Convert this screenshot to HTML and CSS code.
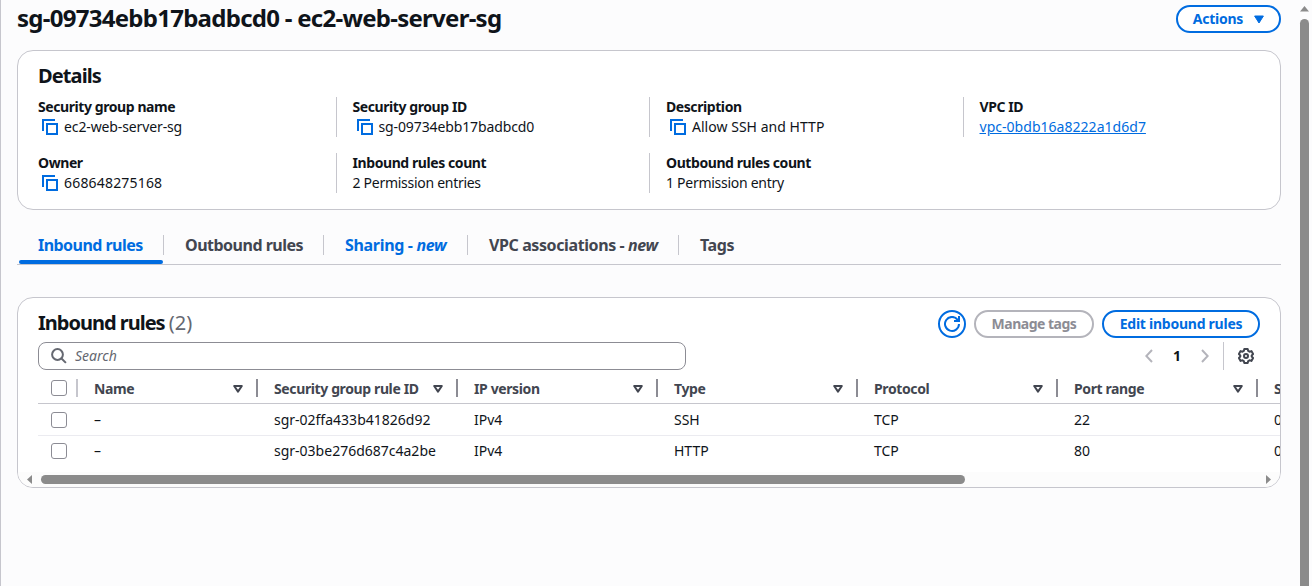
FILE: index.html
```html
<!DOCTYPE html>
<html lang="en">
<head>
<meta charset="utf-8">
<title>Security group</title>
<link rel="stylesheet" href="styles.css">
</head>
<body>
<svg class="defs" width="0" height="0">
  <symbol id="copy" viewBox="0 0 16 16"><path d="M1 12V1h12M5 5h10v10H5z"/></symbol>
  <symbol id="sort" viewBox="0 0 10 8"><path d="M1.2 1h7.6L5 6.6z"/></symbol>
</svg>
<div class="page">
  <main class="content">
    <header class="page-header">
      <h1 class="page-title">sg-09734ebb17badbcd0 - ec2-web-server-sg</h1>
      <button class="button actions">Actions<svg class="caret" viewBox="0 0 10 9"><path d="M.6 1h8.8L5 8z"/></svg></button>
    </header>

    <section class="card details">
      <h2 class="card-title">Details</h2>
      <div class="fields">
        <div class="field"><div class="label">Security group name</div><div class="value"><svg class="copy"><use href="#copy"/></svg>ec2-web-server-sg</div></div>
        <div class="field"><div class="label">Security group ID</div><div class="value"><svg class="copy"><use href="#copy"/></svg>sg-09734ebb17badbcd0</div></div>
        <div class="field"><div class="label">Description</div><div class="value roomy"><svg class="copy"><use href="#copy"/></svg>Allow SSH and HTTP</div></div>
        <div class="field"><div class="label">VPC ID</div><div class="value roomy"><a class="link" href="#">vpc-0bdb16a8222a1d6d7</a></div></div>
        <div class="field"><div class="label">Owner</div><div class="value digits"><svg class="copy"><use href="#copy"/></svg>668648275168</div></div>
        <div class="field"><div class="label">Inbound rules count</div><div class="value tight">2 Permission entries</div></div>
        <div class="field"><div class="label">Outbound rules count</div><div class="value tight">1 Permission entry</div></div>
      </div>
    </section>

    <nav class="tabs">
      <div class="tab tab-inbound">Inbound rules</div>
      <div class="tab tab-outbound">Outbound rules</div>
      <div class="tab tab-sharing">Sharing - <i>new</i></div>
      <div class="tab tab-vpc">VPC associations - <i>new</i></div>
      <div class="tab tab-tags">Tags</div>
    </nav>

    <section class="card rules">
      <div class="rules-header">
        <h2 class="card-title">Inbound rules <span class="count">(2)</span></h2>
        <div class="buttons">
          <button class="button refresh"><svg viewBox="0 0 16 16"><path d="M15 8a7 7 0 1 1-1.500-4.400L14.600 5M15 0v5h-5"/></svg></button>
          <button class="button manage">Manage tags</button>
          <button class="button edit">Edit inbound rules</button>
        </div>
      </div>
      <div class="tools">
        <div class="search"><svg viewBox="0 0 16 16"><circle cx="6.5" cy="6.5" r="5.4"/><path d="m10.5 10.5 4.4 4.4"/></svg><span>Search</span></div>
        <div class="paging">
          <svg class="chevron" viewBox="0 0 8 14"><path d="M7 1 1.3 7 7 13"/></svg>
          <span class="page-number">1</span>
          <svg class="chevron" viewBox="0 0 8 14"><path d="m1 1 5.7 6L1 13"/></svg>
          <span class="settings"><svg viewBox="0 0 16 16"><path d="M6.3 1h3.4l.5 1.900 1.300.8 1.900-.6 1.700 3L13.700 7.400v1.200l1.400 1.300-1.700 3-1.900-.6-1.300.8L9.700 15H6.300l-.5-1.900-1.300-.8-1.900.6-1.700-3 1.400-1.300V7.400L.9 6.100l1.700-3 1.900.6 1.300-.8z"/><circle cx="8" cy="8" r="2"/></svg></span>
        </div>
      </div>
      <div class="table">
        <div class="row head">
          <div class="cell select"><span class="checkbox"></span></div>
          <div class="cell name">Name<svg class="sort"><use href="#sort"/></svg></div>
          <div class="cell">Security group rule ID<svg class="sort"><use href="#sort"/></svg></div>
          <div class="cell">IP version<svg class="sort"><use href="#sort"/></svg></div>
          <div class="cell">Type<svg class="sort"><use href="#sort"/></svg></div>
          <div class="cell">Protocol<svg class="sort"><use href="#sort"/></svg></div>
          <div class="cell">Port range<svg class="sort"><use href="#sort"/></svg></div>
          <div class="cell">S</div>
        </div>
        <div class="row">
          <div class="cell select"><span class="checkbox"></span></div>
          <div class="cell name">–</div><div class="cell">sgr-02ffa433b41826d92</div><div class="cell">IPv4</div><div class="cell">SSH</div><div class="cell">TCP</div><div class="cell">22</div><div class="cell">0</div>
        </div>
        <div class="row last">
          <div class="cell select"><span class="checkbox"></span></div>
          <div class="cell name">–</div><div class="cell">sgr-03be276d687c4a2be</div><div class="cell">IPv4</div><div class="cell">HTTP</div><div class="cell">TCP</div><div class="cell">80</div><div class="cell">0</div>
        </div>
      </div>
      <div class="hscroll">
        <svg class="arrow" viewBox="0 0 5 9"><path d="M5 0v9L0 4.500z"/></svg>
        <div class="track"><div class="thumb"></div></div>
        <svg class="arrow" viewBox="0 0 5 9"><path d="M0 0v9l5-4.500z"/></svg>
      </div>
    </section>
  </main>
  <div class="vscroll"><svg viewBox="0 0 9 6"><path d="M0 5.500h9L4.500 0z"/></svg><div class="vthumb"></div></div>
</div>
</body>
</html>
```
FILE: styles.css
```css
* { box-sizing: border-box; }
body { margin: 0; overflow: hidden; background: #fcfcfd; color: #0f141a; font: 14px/20px "Noto Sans", "Open Sans", sans-serif; }
svg { display: block; flex: none; fill: none; }
.defs { position: absolute; }
h1, h2 { margin: 0; }
.page { display: flex; height: 586px; border-left: 1px solid #c6c6cd; }
.content { width: 1280px; padding: 5px 0 0 16px; flex: none; }
.page-header { display: flex; justify-content: space-between; width: 1264px; height: 45px; }
.page-title { font-size: 24px; line-height: 26px; font-weight: 700; letter-spacing: -0.73px; white-space: nowrap; }
.button { display: flex; align-items: center; justify-content: center; height: 28px; padding: 0; border: 2px solid #006ce0; border-radius: 14px; background: #fff; color: #006ce0; font: 700 14px/20px "Noto Sans", sans-serif; letter-spacing: -0.25px; white-space: nowrap; }
.actions { width: 105px; gap: 11px; }
.caret { width: 10px; height: 9px; fill: #006ce0; stroke: #006ce0; stroke-linejoin: round; }
.card { width: 1264px; border: 1px solid #c6c6cd; border-radius: 16px; background: #fff; }
.card-title { font-size: 20px; line-height: 24px; font-weight: 700; letter-spacing: -0.9px; }
.details { height: 160px; padding: 13px 20px 0; }
.fields { display: grid; grid-template-columns: repeat(4, 1fr); gap: 16px 32px; margin-top: 9px; }
.field { height: 40px; margin-left: -16px; padding-left: 16px; border-left: 1px solid #c6c6cd; white-space: nowrap; }
.field:nth-child(4n + 1) { margin-left: 0; padding-left: 0; border: 0; }
.label { font-weight: 700; letter-spacing: -0.42px; }
.value { display: flex; align-items: center; letter-spacing: -0.12px; }
.roomy { letter-spacing: 0.03px; }
.digits { letter-spacing: 0.18px; }
.tight { letter-spacing: -0.28px; }
.copy { width: 16px; height: 16px; margin: 0 6px 0 4px; stroke: #006ce0; stroke-width: 2; }
.link { color: #006ce0; }
.tabs { display: flex; width: 1264px; height: 55px; padding-top: 25px; border-bottom: 1px solid #c6c6cd; color: #424650; font-size: 16px; font-weight: 700; letter-spacing: -0.4px; white-space: nowrap; }
.tab { height: 20px; padding-left: 21px; border-right: 1px solid #c6c6cd; }
.tab-inbound { position: relative; width: 147px; color: #006ce0; letter-spacing: -0.54px; }
.tab-inbound::after { content: ""; position: absolute; left: 2px; right: 0; top: 25px; height: 4px; border-radius: 2px; background: #006ce0; }
.tab-outbound { width: 160px; letter-spacing: -0.5px; }
.tab-sharing { width: 144px; color: #006ce0; letter-spacing: -0.32px; }
.tab-vpc { width: 211px; }
.tab-tags { border: 0; }
.rules { height: 191px; margin-top: 32px; padding-top: 12px; overflow: hidden; }
.rules-header { display: flex; justify-content: space-between; height: 32px; padding: 0 20px; }
.rules-header .card-title { padding-top: 1px; letter-spacing: -1px; }
.count { color: #656871; font-weight: 400; letter-spacing: 0; }
.buttons { display: flex; gap: 8px; }
.refresh { width: 28px; }
.refresh svg { width: 16px; height: 16px; stroke: #006ce0; stroke-width: 2; }
.manage { width: 120px; border-color: #b4b4bb; color: #8c8c94; letter-spacing: -0.5px; }
.edit { width: 158px; }
.tools { display: flex; justify-content: space-between; height: 31px; padding: 0 20px; }
.search { display: flex; align-items: center; gap: 8px; width: 648px; height: 28px; padding-left: 12px; border: 1px solid #8c8c94; border-radius: 8px; color: #656871; font-style: italic; }
.search svg { width: 16px; height: 16px; stroke: #656871; stroke-width: 2; }
.paging { display: flex; align-items: center; height: 28px; font-weight: 700; }
.chevron { width: 8px; height: 14px; stroke: #b4b4bb; stroke-width: 2; }
.page-number { width: 48px; text-align: center; }
.settings { display: flex; align-items: center; height: 28px; margin-left: 14px; padding: 0 6px 0 14px; border-left: 1px solid #c6c6cd; }
.settings svg { width: 16px; height: 16px; stroke: #424650; stroke-width: 2; stroke-linejoin: round; }
.table { margin-left: 20px; }
.row { display: flex; width: 1242px; height: 32px; overflow: hidden; border-bottom: 1px solid #ebebf0; }
.cell { display: flex; align-items: center; justify-content: space-between; flex: none; width: 200px; height: 31px; padding: 0 15px 0 16px; white-space: nowrap; }
.last { height: 31px; border: 0; }
.last .cell { height: 30px; }
.head { height: 31px; border-color: #c6c6cd; color: #424650; font-weight: 700; letter-spacing: -0.38px; }
.head .cell { height: 30px; padding-top: 1px; background: linear-gradient(#8c8c94, #8c8c94) right 0 center / 2px 18px no-repeat; }
.cell:last-child { width: 22px; padding-right: 0; }
.head .cell:last-child { background: none; }
.select, .head .select { width: 40px; padding: 0 0 0 13px; }
.head .select { background-image: linear-gradient(#c6c6cd, #c6c6cd); }
.name { width: 180px; }
.checkbox { width: 16px; height: 16px; border: 1px solid #8c8c94; border-radius: 3px; background: #fff; }
.sort { width: 10px; height: 8px; stroke: #424650; stroke-width: 2; stroke-linejoin: round; }
.hscroll { display: flex; align-items: center; height: 15px; margin-top: 5px; padding: 0 9px; background: #fcfcfc; }
.arrow { width: 5px; height: 9px; fill: #8b8b8b; }
.track { flex: 1; padding-left: 9px; }
.thumb { width: 924px; height: 9px; border-radius: 5px; background: #8b8b8b; }
.vscroll { width: 15px; margin-left: 16px; padding: 6px 0 0 3px; }
.vscroll svg { width: 9px; height: 6px; fill: #8b8b8b; }
.vthumb { width: 9px; height: 580px; margin-top: 7px; border-radius: 5px; background: #8b8b8b; }
```
